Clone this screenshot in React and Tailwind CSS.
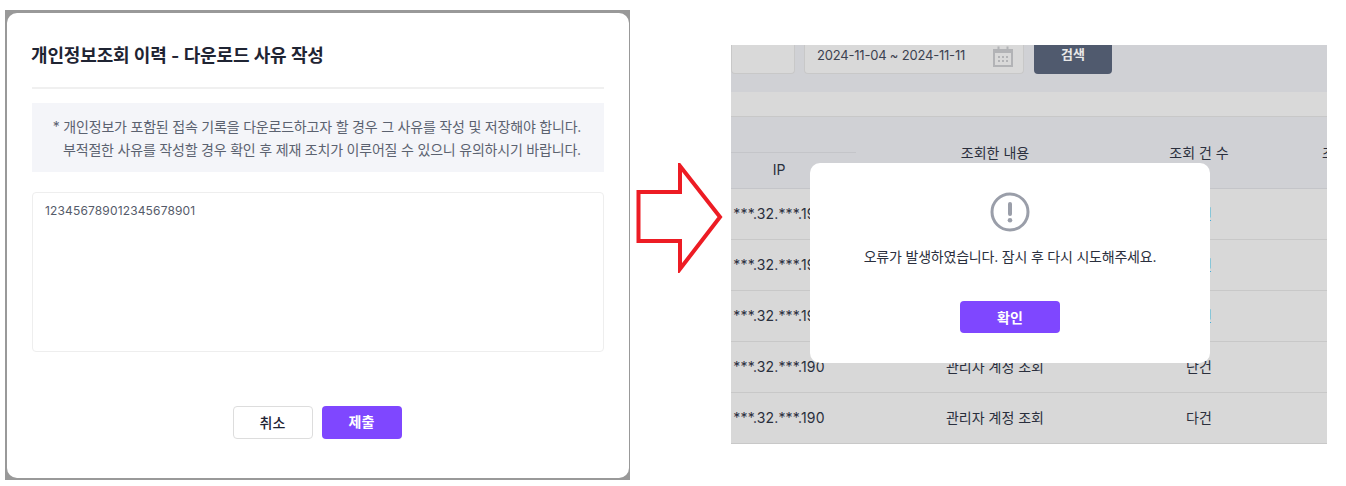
const rows = [
  { ip: '***.32.***.190', label: '관리자 계정 조회', count: '다건', link: true },
  { ip: '***.32.***.190', label: '관리자 계정 조회', count: '다건', link: true },
  { ip: '***.32.***.190', label: '관리자 계정 조회', count: '다건', link: true },
  { ip: '***.32.***.190', label: '관리자 계정 조회', count: '단건', link: false },
  { ip: '***.32.***.190', label: '관리자 계정 조회', count: '다건', link: false },
];

function ReasonModal() {
  return (
    <div className="ml-[5px] mt-[10px] w-[625px] h-[470px] shrink-0 bg-[#999999] pt-[3px] pl-[2px] pr-px pb-[2px]">
      <div className="h-full bg-white rounded-[10px] px-[25px] flex flex-col">
        <h2 className="mt-[28px] -ml-px h-[30px] leading-[30px] text-[18px] font-semibold tracking-[-0.15px] text-[#1f2433] whitespace-nowrap">
          개인정보조회 이력 - 다운로드 사유 작성
        </h2>
        <div className="mt-[16px] h-[2px] bg-[#f0f0f0]" />
        <div className="mt-[14px] h-[69px] bg-[#f4f5f9] pr-[2px] flex flex-col justify-center items-center text-[14px] tracking-[-0.2px] leading-[23px] text-[#5b6270] whitespace-nowrap">
          <p>* 개인정보가 포함된 접속 기록을 다운로드하고자 할 경우 그 사유를 작성 및 저장해야 합니다.</p>
          <p className="pl-[10px]">부적절한 사유를 작성할 경우 확인 후 제재 조치가 이루어질 수 있으니 유의하시기 바랍니다.</p>
        </div>
        <div className="mt-[20px] h-[160px] border border-[#eeeeee] rounded-[4px] px-[12px] pt-[9px] text-[12px] tracking-[0.15px] leading-[18px] text-[#555b6a]">
          123456789012345678901
        </div>
        <div className="mt-[54px] flex justify-center gap-[9px] pr-[2px]">
          <button className="w-[80px] h-[33px] bg-white border border-[#dddddd] rounded-[4px] text-[14px] font-medium text-[#1f2433]">
            취소
          </button>
          <button className="w-[80px] h-[33px] pb-[2px] bg-[#7f47ff] rounded-[4px] text-[14px] font-semibold text-white">
            제출
          </button>
        </div>
      </div>
    </div>
  );
}

function Arrow() {
  return (
    <svg className="ml-[6px] mt-[163px] shrink-0" width="88" height="110" viewBox="0 0 88 110" fill="none">
      <path d="M2.5 29H44V3L84 54L44 106V78H2.5Z" stroke="#ed1c24" strokeWidth="4" strokeLinejoin="miter" />
    </svg>
  );
}

function ErrorDialog() {
  return (
    <div className="absolute left-[79px] top-[118px] w-[400px] h-[200px] bg-white rounded-[10px] flex flex-col items-center">
      <svg className="mt-[29px]" width="40" height="40" viewBox="0 0 40 40" fill="none">
        <circle cx="20" cy="20" r="18" stroke="#9a9ea9" strokeWidth="3" />
        <path d="M20 12V22" stroke="#9a9ea9" strokeWidth="4" strokeLinecap="round" />
        <circle cx="20" cy="28.3" r="2.3" fill="#9a9ea9" />
      </svg>
      <p className="mt-[15px] h-[20px] leading-[20px] text-[14px] tracking-[-0.2px] text-[#2a2f3d] whitespace-nowrap">
        오류가 발생하였습니다. 잠시 후 다시 시도해주세요.
      </p>
      <button className="mt-[34px] w-[100px] h-[32px] bg-[#7f47ff] rounded-[4px] text-[14px] font-semibold text-white">
        확인
      </button>
    </div>
  );
}

function AccessLog() {
  return (
    <div className="relative ml-[7px] mt-[45px] w-[596px] h-[399px] shrink-0 overflow-hidden bg-[#d8d8d8] text-[14px] text-[#2a2f3d]">
      <div className="h-[47px] bg-[#d0d1d5] flex items-start gap-[9px]">
        <div className="w-[64px] h-[29px] bg-[#d9d9d9] border border-[#c8c8c8] border-t-0 rounded-b-[4px]" />
        <div className="w-[220px] h-[29px] bg-[#d9d9d9] border border-[#c8c8c8] border-t-0 rounded-b-[4px] pl-[12px] pr-[10px] flex items-start justify-between">
          <span className="text-[13px] tracking-[-0.2px] leading-[21px] text-[#3c4250]">2024-11-04 ~ 2024-11-11</span>
          <svg className="mt-[1px]" width="20" height="21" viewBox="0 0 20 21" fill="none">
            <rect x="1" y="4" width="18" height="16" stroke="#b2b3b6" strokeWidth="2" />
            <rect x="1" y="3" width="18" height="4" fill="#b2b3b6" />
            <path d="M5.5 0.5V4M14.5 0.5V4" stroke="#b2b3b6" strokeWidth="2" />
            <path d="M5 11h2M9 11h2M13 11h2M5 15h2M9 15h2M13 15h2" stroke="#b2b3b6" strokeWidth="2" />
          </svg>
        </div>
        <div className="ml-px w-[78px] h-[29px] bg-[#505a6e] rounded-b-[4px] text-center text-[13px] leading-[19px] font-semibold text-[#e8e8e8]">
          검색
        </div>
      </div>
      <div className="h-[25px] bg-[#d9d9d9] border-b border-[#c8c8c8]" />
      <div className="h-[72px] bg-[#d0d1d5] grid grid-cols-[125px_278px_130px_63px] border-b border-[#c4c5c9]">
        <div className="flex flex-col">
          <div className="h-[36px] border-b border-[#c4c5c9]" />
          <div className="pr-[29px] text-center leading-[34px]">IP</div>
        </div>
        <div className="text-center leading-[71px]">조회한 내용</div>
        <div className="text-center leading-[71px]">조회 건 수</div>
        <div className="leading-[71px] whitespace-nowrap pl-[58px]">조</div>
      </div>
      {rows.map((row, i) => (
        <div key={i} className="h-[51px] pb-[2px] grid grid-cols-[125px_278px_130px_63px] items-center border-b border-[#c8c8c8]">
          <div className="pr-[29px] text-center tracking-[0.15px] whitespace-nowrap">{row.ip}</div>
          <div className="text-center">{row.label}</div>
          <div className={row.link ? 'text-center text-[#1f7ae0]' : 'text-center'}>{row.count}</div>
          <div />
        </div>
      ))}
      <ErrorDialog />
    </div>
  );
}

export default function App() {
  return (
    <div className="w-[1346px] h-[486px] bg-white overflow-hidden flex items-start font-['Inter','Noto_Sans_CJK_KR',sans-serif]">
      <ReasonModal />
      <Arrow />
      <AccessLog />
    </div>
  );
}
